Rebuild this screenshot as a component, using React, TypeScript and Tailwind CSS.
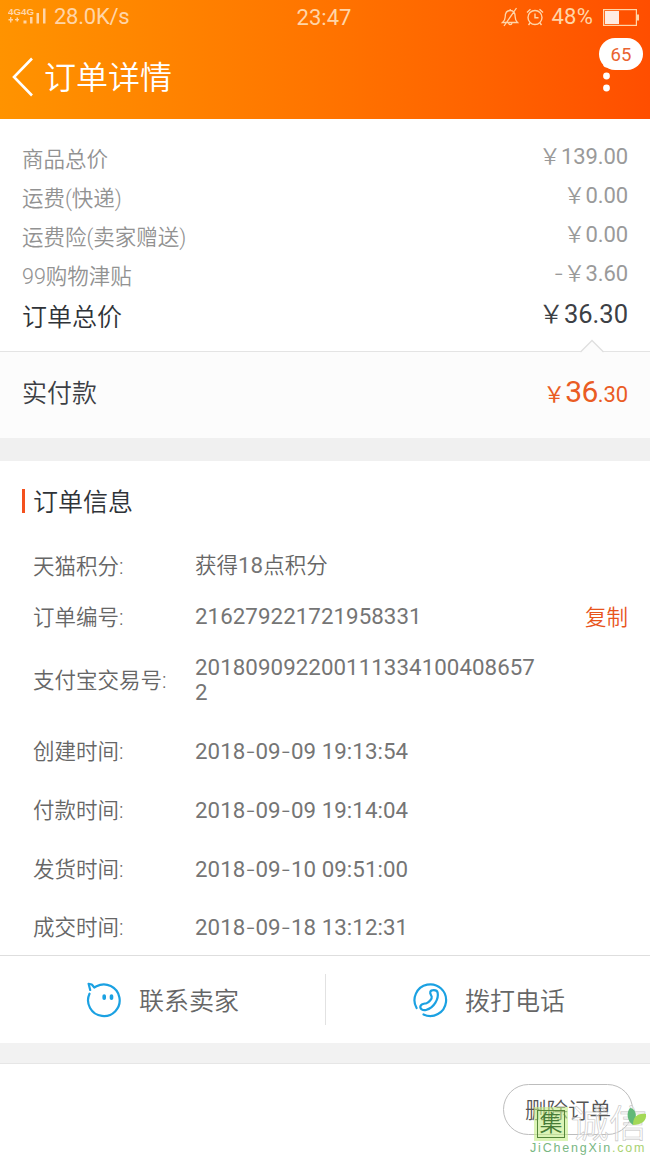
import React from 'react';

interface PriceRow {
  label: string;
  price: string;
}

interface InfoRow {
  label: string;
  value: string;
  height: string;
  copyable?: boolean;
}

const priceRows: PriceRow[] = [
  { label: '商品总价', price: '￥139.00' },
  { label: '运费(快递)', price: '￥0.00' },
  { label: '运费险(卖家赠送)', price: '￥0.00' },
  { label: '99购物津贴', price: '-￥3.60' }
];

const infoRows: InfoRow[] = [
  { label: '天猫积分:', value: '获得18点积分', height: 'h-[51px]' },
  { label: '订单编号:', value: '216279221721958331', height: 'h-[51px]', copyable: true },
  { label: '支付宝交易号:', value: '2018090922001113341004086572', height: 'h-[75px]' },
  { label: '创建时间:', value: '2018-09-09 19:13:54', height: 'h-[68px]' },
  { label: '付款时间:', value: '2018-09-09 19:14:04', height: 'h-[50px]' },
  { label: '发货时间:', value: '2018-09-10 09:51:00', height: 'h-[67px]' },
  { label: '成交时间:', value: '2018-09-18 13:12:31', height: 'h-[50px]' }
];

// Chinese text is set slightly smaller than the digits, dashes are wider than the ones in Roboto
function Digits({ text }: { text: string }) {
  const parts = text.split(/(-|￥|[\u4e00-\u9fff]+)/).filter(Boolean);
  return (
    <>
      {parts.map((part, i) => {
        if (part === '-') {
          return <span key={i} className="font-['Inter']">-</span>;
        }
        if (part === '￥') {
          return <span key={i}>{part}</span>;
        }
        if (/[\u4e00-\u9fff]/.test(part)) {
          return <span key={i} className="text-[21.500px] tracking-normal text-[#666]">{part}</span>;
        }
        return <span key={i} className="font-normal">{part}</span>;
      })}
    </>
  );
}

function StatusBar() {
  return (
    <div className="flex h-[34px] items-center justify-between pl-2 pr-[10px] text-[#ffd5a8]">
      <div className="flex w-[200px] items-center">
        <svg width="40" height="18" viewBox="0 0 40 18" fill="currentColor">
          <text x="0" y="7" fontSize="8.500" fontWeight="700" fontFamily="Liberation Sans, sans-serif" textLength="26" lengthAdjust="spacingAndGlyphs">
            4G4G
          </text>
          <path d="M2 9h1.400v2H5v1.400H3.400v2H2v-2H.5V11H2zM7 11h4v1.200H7zM8.500 9.500H10v4H8.500z" />
          <rect x="15.500" y="12.500" width="3" height="3" />
          <rect x="22" y="9" width="2.500" height="6.500" />
          <rect x="28.500" y="5" width="2.500" height="10.500" />
          <rect x="35" y="0.500" width="2.500" height="15" />
        </svg>
        <span className="ml-[6px] text-[22px] font-normal leading-none tracking-[-0.250px]">28.0K/s</span>
      </div>
      <span className="pt-px text-[22px] font-normal leading-none">23:47</span>
      <div className="flex w-[200px] items-center justify-end">
        <svg width="18" height="20" viewBox="0 0 18 20" fill="none" stroke="currentColor" strokeWidth="1.300">
          <path d="M1.500 15.500h15c-1.500-1.500-2.300-3-2.300-5.500 0-4-1.500-6.500-5-6.500S4.200 6 4.200 10c0 2.500-1 4-2.700 5.500zM7.500 16c.3 2.200 3.200 2.200 3.500 0M9.200 3.500V2M15.500 1 3 19" />
        </svg>
        <svg className="ml-[7px]" width="18" height="18" viewBox="0 0 18 18" fill="none" stroke="currentColor" strokeWidth="1.400">
          <circle cx="9" cy="9.500" r="7" />
          <path d="M9 5.500v4.300h3.500M1 4.500 4.500 1.300M17 4.500l-3.500-3.200M4 15l-1.500 2M14 15l1.500 2" />
        </svg>
        <span className="ml-[8px] text-[22px] font-normal leading-none tracking-[0.200px]">48%</span>
        <svg className="ml-[10px]" width="37" height="17" viewBox="0 0 37 17">
          <rect x="0.600" y="0.600" width="32.800" height="15.800" fill="none" stroke="currentColor" strokeWidth="1.200" />
          <rect x="2" y="2" width="14" height="13" fill="#ffece2" />
          <rect x="34" y="5.500" width="2" height="6" fill="currentColor" />
        </svg>
      </div>
    </div>
  );
}

function Header() {
  return (
    <header className="h-[119px] bg-linear-to-r from-[#ff9300] to-[#ff4e00]">
      <StatusBar />
      <div className="relative flex h-[85px] items-center text-white">
        <svg className="ml-3" width="22" height="40" viewBox="0 0 22 40" fill="none" stroke="currentColor" strokeWidth="2.600">
          <path d="M20 1.500 2 20l18 18.500" />
        </svg>
        <h1 className="ml-[10px] pt-[2px] text-[32px] leading-none">订单详情</h1>
        <svg className="absolute left-[602px] top-[26px]" width="9" height="36" viewBox="0 0 9 36" fill="currentColor">
          <circle cx="4.500" cy="4" r="3.400" />
          <circle cx="4.500" cy="16" r="3.400" />
          <circle cx="4.500" cy="28" r="3.400" />
        </svg>
        <span className="absolute right-[7px] top-1 flex h-8 w-11 items-center justify-center rounded-full bg-white pt-[4px] text-[18.500px] font-normal text-[#ea6330]">
          65
        </span>
      </div>
    </header>
  );
}

function ChatIcon() {
  return (
    <svg width="36" height="36" viewBox="0 0 36 36" fill="none" stroke="#1ba1e2" strokeWidth="2.200" strokeLinejoin="round" strokeLinecap="round">
      <path d="M4.200 8 2.600 1.800 5.800 2.500 8.300 5.500 10.500 4.300A15.800 15.800 0 1 1 3.500 11.700" />
      <path d="M18.200 14v2.200M25.500 14v2.200" strokeWidth="3.600" />
    </svg>
  );
}

function PhoneIcon() {
  return (
    <svg width="36" height="36" viewBox="0 0 36 36" fill="none" stroke="#1ba1e2" strokeWidth="2.200" strokeLinejoin="round" strokeLinecap="round">
      <path d="M4.600 26A15.800 15.800 0 1 1 11.500 32.400" />
      <path d="M18.300 9.800c.8-2 6.500-2.500 7.300.7 1.300 6-3.200 15.200-11.600 17.500-3.300.8-6.500-1.300-5.500-4 1-2.500 3.700-2.200 6-2.800 2.200-.5 5.800-4.400 5.200-6.600-.5-1.500-2-2.800-1.400-4.800z" />
    </svg>
  );
}

function Watermark() {
  return (
    <div className="pointer-events-none absolute bottom-0 right-0 h-[50px] w-[120px]">
      <div className="flex h-[37px] items-center">
        <div className="ml-1 flex size-[34px] shrink-0 items-center justify-center bg-[#c3ec85]/60">
          <span className="flex size-[28px] items-center justify-center border-[1.500px] border-[#55863a] text-[23px] leading-none text-[#487c38]">
            集
          </span>
        </div>
        <span className="ml-[3px] whitespace-nowrap text-[38px] leading-none text-white/50 [-webkit-text-stroke:0.600px_#c4c4c4]">诚信</span>
      </div>
      <svg className="absolute right-[3px] top-[2px]" width="20" height="20" viewBox="0 0 20 20">
        <path d="M6 18C0 14-1 6 3 1c6 1 8 8 3 17z" fill="#61b878" />
        <path d="M6 18C6 10 10 6 19 7c1 7-5 11-13 11z" fill="#a3d957" />
      </svg>
      <p className="whitespace-nowrap font-['Liberation_Sans'] text-[12.500px] font-normal leading-[13px] tracking-[1.800px] text-[#79b783]">
        JiChengXin<span className="text-[#a9d271]">.com</span>
      </p>
    </div>
  );
}

export default function App() {
  return (
    <div className="relative flex h-[1155px] w-[650px] flex-col overflow-hidden bg-white font-['Roboto','Noto_Sans_CJK_SC',sans-serif] font-[350]">
      <Header />

      <section className="h-[233px] border-b border-[#e4e4e4] px-[22px] pt-5">
        {priceRows.map((row) => (
          <div key={row.label} className="flex h-[39px] items-center justify-between text-[21.500px] leading-none text-[#929292]">
            <span className="pt-[2px]">{row.label}</span>
            <span className="pb-[4px] text-[22px] tracking-[-0.100px] text-[#9a9a9a]">
              <Digits text={row.price} />
            </span>
          </div>
        ))}
        <div className="flex h-[43px] items-center justify-between text-[25px] leading-none text-[#2f3338]">
          <span className="pt-[2px]">订单总价</span>
          <span className="pb-[4px] text-[25.500px] text-[#3c4045]">
            <Digits text="￥36.30" />
          </span>
        </div>
      </section>

      <section className="relative flex h-[86px] items-center justify-between bg-[#fcfcfc] px-[22px] pb-[3px] text-[25px] leading-none">
        <svg className="absolute left-[580px] top-[-13px]" width="24" height="14" viewBox="0 0 24 14">
          <path d="M0.500 13 12 1.500 23.500 13" fill="#fcfcfc" stroke="#dfdfdf" strokeWidth="1.300" />
        </svg>
        <span className="text-[#3c3f44]">实付款</span>
        <span className="pb-[4px] text-[22px] font-normal tracking-[-0.100px] text-[#ea5c24]">
          ￥<span className="text-[30px] tracking-[-0.600px]">36</span>.30
        </span>
      </section>

      <div className="h-[23px] shrink-0 bg-[#f0f0f0]" />

      <section className="h-[494px] shrink-0 pt-[27px]">
        <div className="flex h-[26px] items-center pl-[22px]">
          <span className="h-6 w-[3px] bg-[#f4511e]" />
          <h2 className="ml-2 pt-[2px] text-[25px] leading-none text-[#2f3338]">订单信息</h2>
        </div>
        <div className="pt-[26px]">
          {infoRows.map((row) => (
            <div key={row.label} className={`flex items-center pl-[33px] pr-[22px] text-[21.500px] leading-none text-[#666] ${row.height}`}>
              <span className="w-[162px] shrink-0 pt-[2px]">{row.label}</span>
              <span className="w-[346px] break-all text-[22.300px] leading-[25px] tracking-[0.060px] text-[#757575]">
                <Digits text={row.value} />
              </span>
              {row.copyable && <button className="ml-auto pt-[2px] text-[21.500px] text-[#e8541c]">复制</button>}
            </div>
          ))}
        </div>
      </section>

      <section className="flex h-[88px] shrink-0 items-center border-t border-[#dedede] text-[25px] leading-none text-[#666]">
        <button className="flex h-[51px] w-[326px] items-center border-r border-[#e2e2e2] pl-[86px]">
          <ChatIcon />
          <span className="ml-[17px] pt-[3px]">联系卖家</span>
        </button>
        <button className="flex h-[51px] items-center pl-[86px]">
          <PhoneIcon />
          <span className="ml-[17px] pt-[3px]">拨打电话</span>
        </button>
      </section>

      <div className="h-[21px] shrink-0 border-b border-[#e6e6e6] bg-[#f2f2f2]" />

      <footer className="flex justify-end pr-[17px] pt-5">
        <button className="h-[51px] w-[130px] rounded-full border border-[#bdbdbd] pt-[2px] text-[21.500px] leading-none text-[#555]">
          删除订单
        </button>
      </footer>
      <Watermark />
    </div>
  );
}
